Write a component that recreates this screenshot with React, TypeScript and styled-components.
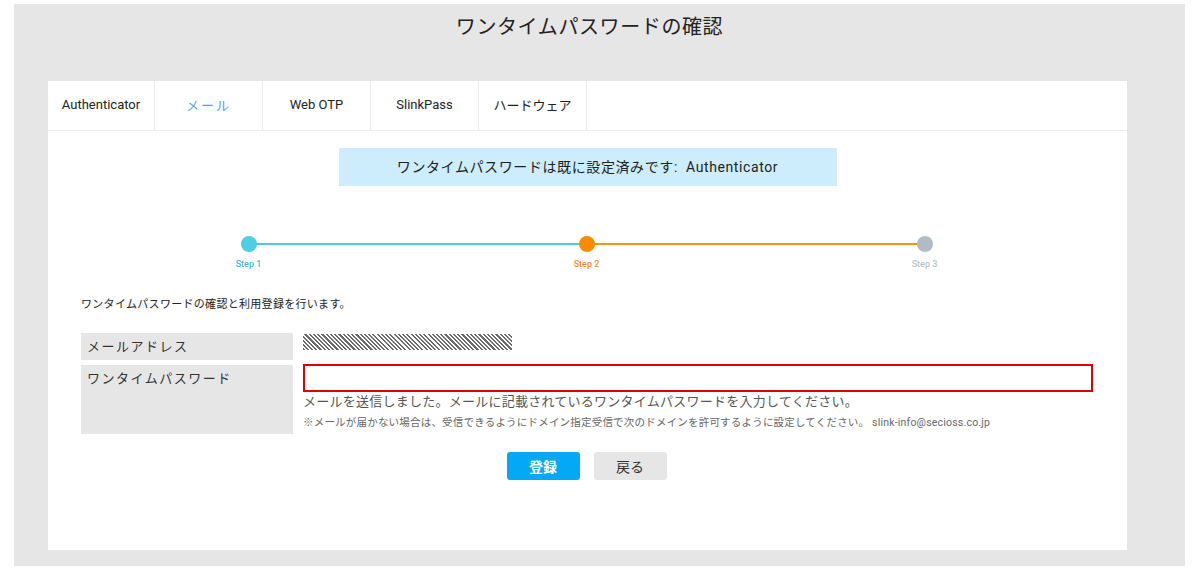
import React from "react";
import styled, { createGlobalStyle } from "styled-components";

const GlobalStyle = createGlobalStyle`
  html, body {
    margin: 0;
    padding: 0;
    background: #ffffff;
    font-family: Roboto, "Noto Sans CJK JP", sans-serif;
    color: #333;
  }
`;

const Page = styled.div`
  margin: 4px 0 0 14px;
  width: 1171px;
  height: 562px;
  background: #e6e6e6;
  display: flex;
  flex-direction: column;
  box-sizing: border-box;
`;

const Title = styled.h1`
  margin: 0;
  height: 77px;
  padding-top: 9px;
  padding-right: 20px;
  box-sizing: border-box;
  text-align: center;
  font-size: 20px;
  font-weight: 400;
  line-height: 28px;
  letter-spacing: 0.6px;
  color: #222;
`;

const Card = styled.div`
  margin-left: 34px;
  width: 1079px;
  height: 469px;
  background: #ffffff;
  box-sizing: border-box;
`;

const TabBar = styled.div`
  display: flex;
  height: 49px;
  border-bottom: 1px solid #ececec;
`;

const Tab = styled.div<{ $active?: boolean; $w?: number }>`
  width: ${(p) => p.$w ?? 108}px;
  box-sizing: border-box;
  display: flex;
  align-items: center;
  justify-content: center;
  padding-bottom: 3px;
  border-right: 1px solid #ececec;
  font-size: 13px;
  color: ${(p) => (p.$active ? "#4aa8e8" : "#222")};
  letter-spacing: ${(p) => (p.$active ? "2px" : "0")};
`;

const Content = styled.div`
  padding: 17px 33px 0 33px;
  display: flex;
  flex-direction: column;
`;

const Notice = styled.div`
  align-self: center;
  width: 498px;
  height: 38px;
  background: #cdedfc;
  display: flex;
  align-items: center;
  justify-content: center;
  font-size: 14px;
  color: #222;
  letter-spacing: 0.6px;
  padding-bottom: 2px;
  box-sizing: border-box;
`;

const Stepper = styled.div`
  align-self: center;
  margin-top: 50px;
  width: 700px;
  display: grid;
  grid-template-columns: 1fr 1fr;
  position: relative;
  margin-left: -2px;
`;

const Track = styled.div<{ $color: string }>`
  height: 2px;
  background: ${(p) => p.$color};
  margin-top: 7px;
  margin-left: 12px;
  margin-right: 0;
`;

const Track2 = styled(Track)`
  margin-left: 0;
  margin-right: 12px;
`;

const StepRow = styled.div`
  position: absolute;
  left: 0;
  right: 0;
  top: 0;
  display: flex;
  justify-content: space-between;
`;

const Step = styled.div<{ $color: string; $text: string }>`
  width: 24px;
  display: flex;
  flex-direction: column;
  align-items: center;

  &::before {
    content: "";
    width: 16px;
    height: 16px;
    border-radius: 50%;
    background: ${(p) => p.$color};
  }

  span {
    margin-top: 7px;
    font-size: 9px;
    font-weight: 500;
    color: ${(p) => p.$text};
    white-space: nowrap;
  }
`;

const Lead = styled.p`
  margin: 50px 0 0 0;
  font-size: 11px;
  color: #222;
  letter-spacing: 0.3px;
`;

const FormGrid = styled.div`
  margin-top: 22px;
  display: grid;
  grid-template-columns: 212px 1fr;
  column-gap: 10px;
  row-gap: 5px;
  width: 1012px;
`;

const Label = styled.div<{ $h: number }>`
  height: ${(p) => p.$h}px;
  background: #e6e6e6;
  font-size: 13px;
  letter-spacing: 1.5px;
  color: #333;
  padding: 3px 0 0 6px;
  box-sizing: border-box;
`;

const Hatch = styled.div`
  margin-top: 1px;
  width: 209px;
  height: 16px;
  background: repeating-linear-gradient(
    45deg,
    #6b6b6b 0px,
    #6b6b6b 1.5px,
    #ffffff 1.5px,
    #ffffff 3px
  );
`;

const Value = styled.div`
  display: flex;
  flex-direction: column;
`;

const Input = styled.input`
  margin: -1px 0 0 0;
  width: 790px;
  height: 28px;
  border: 2px solid #e00000;
  box-sizing: border-box;
  outline: none;
  padding: 0 6px;
`;

const Help = styled.div`
  margin-top: -1px;
  font-size: 13px;
  color: #555;
  letter-spacing: 0.25px;
`;

const Note = styled.div`
  margin-top: 4px;
  font-size: 10.5px;
  color: #666;
  letter-spacing: 0.2px;
`;

const Buttons = styled.div`
  margin-top: 18px;
  display: flex;
  justify-content: center;
  gap: 14px;
  margin-left: -2px;
`;

const Button = styled.button<{ $primary?: boolean }>`
  width: 73px;
  height: 28px;
  border: none;
  border-radius: 3px;
  font-family: "Noto Sans CJK JP", sans-serif;
  font-size: 14px;
  font-weight: ${(p) => (p.$primary ? 700 : 400)};
  background: ${(p) => (p.$primary ? "#03a9f4" : "#e6e6e6")};
  color: ${(p) => (p.$primary ? "#ffffff" : "#333")};
  cursor: pointer;
`;

const tabs = [
  { label: "Authenticator", w: 107 },
  { label: "メール", w: 108, active: true },
  { label: "Web OTP", w: 108 },
  { label: "SlinkPass", w: 108 },
  { label: "ハードウェア", w: 108 },
];

export default function App() {
  return (
    <>
      <GlobalStyle />
      <Page>
        <Title>ワンタイムパスワードの確認</Title>
        <Card>
          <TabBar>
            {tabs.map((t) => (
              <Tab key={t.label} $active={t.active} $w={t.w}>
                {t.label}
              </Tab>
            ))}
          </TabBar>
          <Content>
            <Notice>ワンタイムパスワードは既に設定済みです:&nbsp; Authenticator</Notice>
            <Stepper>
              <Track $color="#4cc9e0" />
              <Track2 $color="#f39318" />
              <StepRow>
                <Step $color="#4ccfe3" $text="#4cb6d0">
                  <span>Step 1</span>
                </Step>
                <Step $color="#fb8c00" $text="#f08a2c">
                  <span>Step 2</span>
                </Step>
                <Step $color="#b0bcc4" $text="#b8c2c8">
                  <span>Step 3</span>
                </Step>
              </StepRow>
            </Stepper>
            <Lead>ワンタイムパスワードの確認と利用登録を行います。</Lead>
            <FormGrid>
              <Label $h={27}>メールアドレス</Label>
              <Value>
                <Hatch />
              </Value>
              <Label $h={69}>ワンタイムパスワード</Label>
              <Value>
                <Input type="text" />
                <Help>メールを送信しました。メールに記載されているワンタイムパスワードを入力してください。</Help>
                <Note>
                  ※メールが届かない場合は、受信できるようにドメイン指定受信で次のドメインを許可するように設定してください。 slink-info@secioss.co.jp
                </Note>
              </Value>
            </FormGrid>
            <Buttons>
              <Button $primary>登録</Button>
              <Button>戻る</Button>
            </Buttons>
          </Content>
        </Card>
      </Page>
    </>
  );
}
